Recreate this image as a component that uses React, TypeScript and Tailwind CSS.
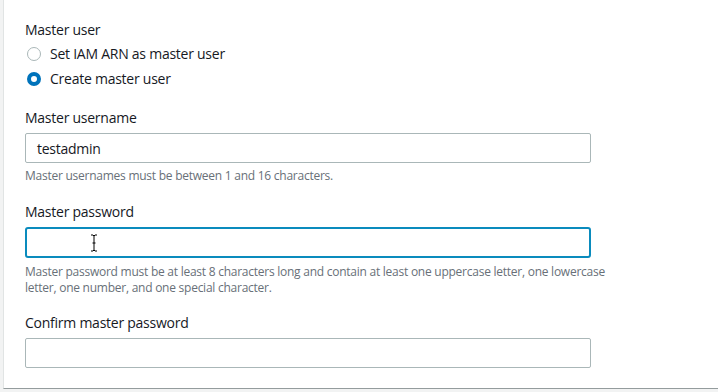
import React from "react";

const font = { fontFamily: '"Open Sans", "Noto Sans", Arial, sans-serif' };

function Radio({ checked, label }: { checked?: boolean; label: string }) {
  return (
    <div className="flex items-center h-[25px]">
      {checked ? (
        <span className="w-[14px] h-[14px] rounded-full border-[4px] border-[#0073bb] bg-white ml-[1px]" />
      ) : (
        <span className="w-[14px] h-[14px] rounded-full border border-[#aab7b8] bg-white ml-[1px]" />
      )}
      <span className="ml-[9px] text-[14px] text-[#16191f] leading-[20px]">{label}</span>
    </div>
  );
}

export default function App() {
  return (
    <div className="w-[718px] h-[392px] bg-[#f2f3f3] overflow-hidden tracking-[-0.25px]" style={font}>
      <div className="ml-[3px] h-[389px] bg-white border-l border-[#e1e4e4] border-b border-b-[#949c9d] pl-[21px] pt-[20px]">
        <div className="text-[14px] leading-[20px] text-[#16191f]">Master user</div>
        <div className="mt-[1px] pl-[1px]">
          <Radio label="Set IAM ARN as master user" />
          <Radio checked label="Create master user" />
        </div>

        <div className="mt-[17px] text-[14px] leading-[20px] text-[#16191f]">Master username</div>
        <div className="mt-[5px] w-[566px] h-[30px] border border-[#aab7b8] rounded-[2px] flex items-center pl-[11px] text-[14px] text-[#16191f]">
          testadmin
        </div>
        <div className="mt-[5px] text-[12px] leading-[16px] text-[#687078]">
          Master usernames must be between 1 and 16 characters.
        </div>

        <div className="mt-[18px] text-[14px] leading-[20px] text-[#16191f]">Master password</div>
        <div className="relative mt-[5px] w-[566px] h-[31px] border-2 border-[#0a8bbd] rounded-[3px]">
          <svg className="absolute left-[63px] top-[5px]" width="8" height="18" viewBox="0 0 8 18">
            <path d="M1 1 L3 1 L4 2 L5 1 L7 1 M4 2 L4 16 M1 17 L3 17 L4 16 L5 17 L7 17 M2.5 9 L5.5 9" stroke="#000" strokeWidth="1" fill="none" />
          </svg>
        </div>
        <div className="mt-[6px] text-[12px] leading-[16px] text-[#687078] w-[600px]">
          Master password must be at least 8 characters long and contain at least one uppercase letter, one lowercase letter, one number, and one special character.
        </div>

        <div className="mt-[17px] text-[14px] leading-[20px] text-[#16191f]">Confirm master password</div>
        <div className="mt-[5px] w-[566px] h-[30px] border border-[#aab7b8] rounded-[2px]" />
      </div>
    </div>
  );
}
